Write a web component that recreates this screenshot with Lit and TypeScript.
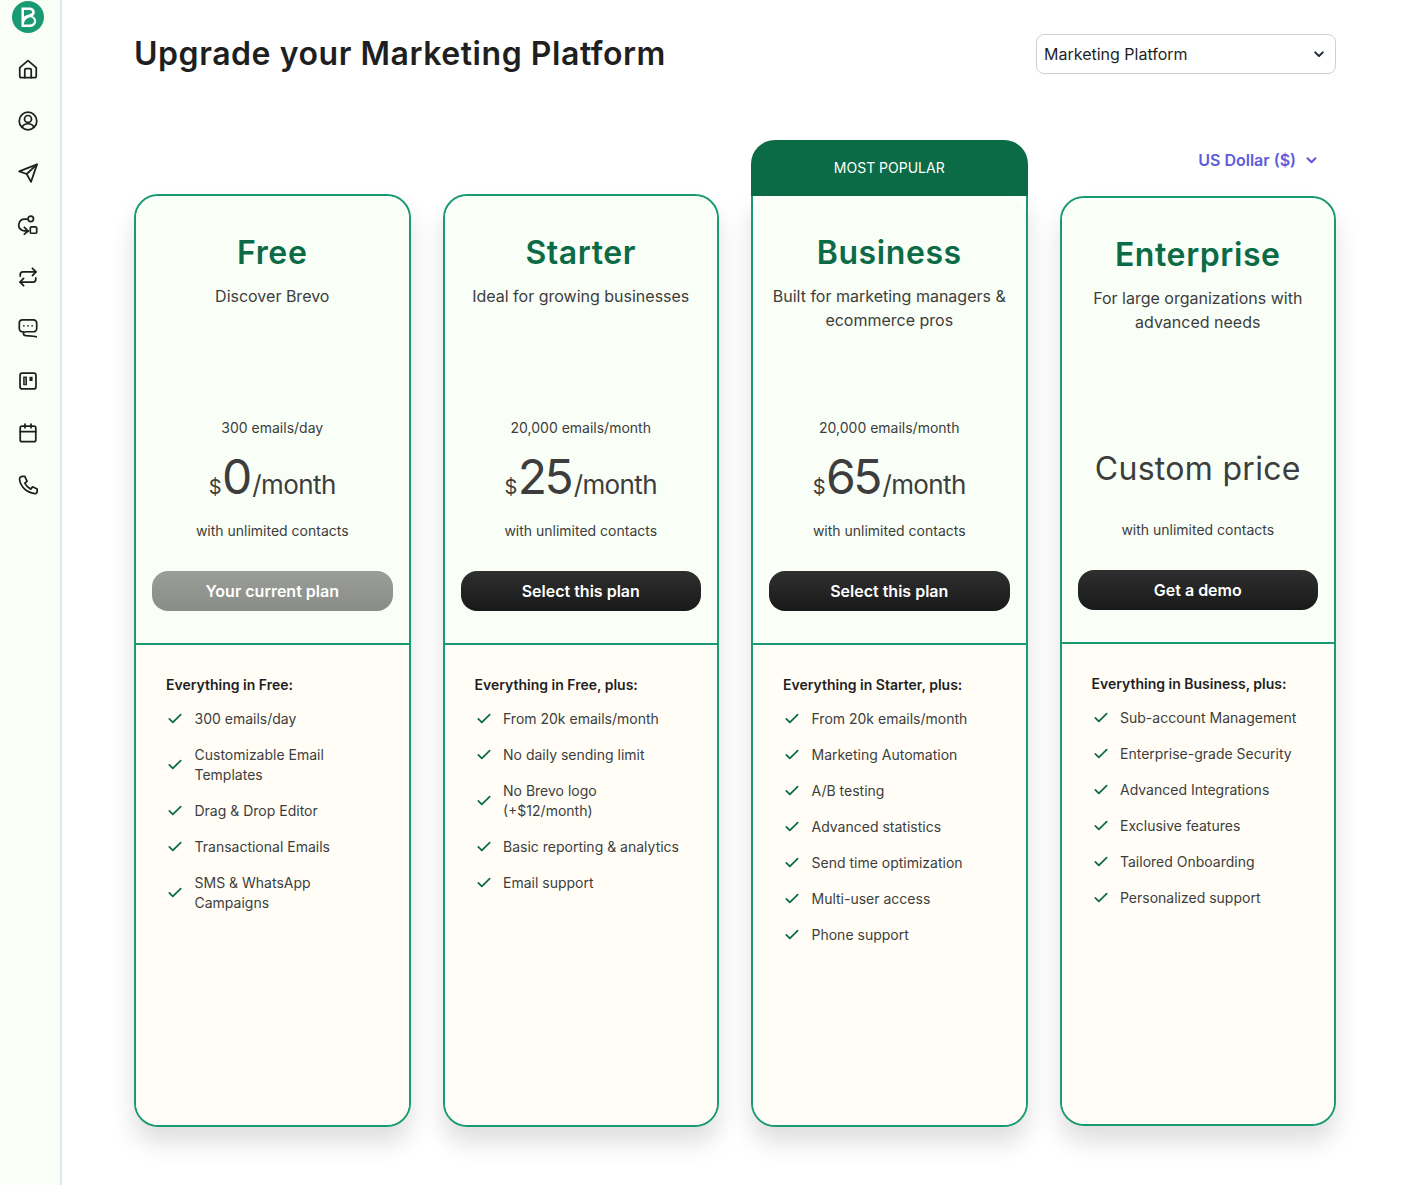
import { LitElement, css, html, nothing, svg } from 'lit';
import { customElement } from 'lit/decorators.js';

interface Plan {
  name: string;
  desc: string;
  allowance?: string;
  price?: string;
  cta: string;
  current?: boolean;
  popular?: boolean;
  custom?: boolean;
  heading: string;
  features: string[];
}

const plans: Plan[] = [
  {
    name: 'Free',
    desc: 'Discover Brevo',
    allowance: '300 emails/day',
    price: '0',
    cta: 'Your current plan',
    current: true,
    heading: 'Everything in Free:',
    features: ['300 emails/day', 'Customizable Email Templates', 'Drag & Drop Editor', 'Transactional Emails', 'SMS & WhatsApp Campaigns'],
  },
  {
    name: 'Starter',
    desc: 'Ideal for growing businesses',
    allowance: '20,000 emails/month',
    price: '25',
    cta: 'Select this plan',
    heading: 'Everything in Free, plus:',
    features: ['From 20k emails/month', 'No daily sending limit', 'No Brevo logo (+$12/month)', 'Basic reporting & analytics', 'Email support'],
  },
  {
    name: 'Business',
    desc: 'Built for marketing managers & ecommerce pros',
    allowance: '20,000 emails/month',
    price: '65',
    cta: 'Select this plan',
    popular: true,
    heading: 'Everything in Starter, plus:',
    features: ['From 20k emails/month', 'Marketing Automation', 'A/B testing', 'Advanced statistics', 'Send time optimization', 'Multi-user access', 'Phone support'],
  },
  {
    name: 'Enterprise',
    desc: 'For large organizations with advanced needs',
    custom: true,
    cta: 'Get a demo',
    heading: 'Everything in Business, plus:',
    features: ['Sub-account Management', 'Enterprise-grade Security', 'Advanced Integrations', 'Exclusive features', 'Tailored Onboarding', 'Personalized support'],
  },
];

const navIcons = [
  svg`<path d="M3 10.500 12 2.800l9 7.700v9a2 2 0 0 1-2 2H5a2 2 0 0 1-2-2z"/><path d="M8.500 21.500V13a1.500 1.500 0 0 1 1.500-1.500h4a1.500 1.500 0 0 1 1.500 1.500v8.500"/>`,
  svg`<circle cx="12" cy="12" r="9.600"/><circle cx="12" cy="9.800" r="3.800"/><path d="M5.500 19c1.200-2.800 3.600-4 6.500-4s5.300 1.200 6.500 4"/>`,
  svg`<path d="M21.800 2.600 2.400 10.200l8.200 2.900 4.700 8.600z"/><path d="M21.800 2.600 10.600 13.100"/>`,
  svg`<circle cx="15" cy="5.300" r="3"/><rect x="14.500" y="14" width="7" height="7" rx="1.500"/><path d="M11 5.500H8.500a6.500 6.500 0 0 0-2.500 12.500c1.500.6 3.200.6 6 .6"/><path d="m8 14.500 4.200 4.100L8 22"/>`,
  svg`<path d="M3.500 11V9.500a3 3 0 0 1 3-3h14"/><path d="m16.800 2.500 3.900 4-3.900 4"/><path d="M20.500 13v1.500a3 3 0 0 1-3 3h-14"/><path d="m7.200 13.500-3.900 4 3.900 4"/>`,
  svg`<path d="M7 15H6a3.500 3.500 0 0 1-3.500-3.500V5.500A3.500 3.500 0 0 1 6 2h12a3.500 3.500 0 0 1 3.500 3.500v6A3.500 3.500 0 0 1 18 15h-8c-2 0-3 .6-3 1.800s1.200 2.300 3 2.500c3.500.2 8.500 0 11 1.200"/><path d="M7.500 8.500h.01M12 8.500h.01M16.500 8.500h.01"/>`,
  svg`<rect x="3.300" y="3.300" width="17.400" height="17.400" rx="2.500"/><rect x="7.400" y="7.700" width="2.800" height="8.400" fill="#8a8a8a" stroke-width="1.300"/><rect x="13.600" y="7.400" width="3.400" height="4.600" fill="currentColor" stroke="none"/>`,
  svg`<rect x="3.500" y="4.500" width="17" height="17" rx="2"/><path d="M3.500 10.500h17M8.700 2.300v4M15.300 2.300v4"/>`,
  svg`<path d="M6 2.500h2.500L11 8 8.500 10c1.500 3 3.500 5 6.500 6.500l2-2.500 5 2.300v2.700c0 1.500-1.200 2.500-2.700 2.300C10 20 3.500 13.500 2.800 5.500 2.700 3.800 4 2.500 6 2.500z"/>`,
];

const chevron = html`<svg class="chevron" viewBox="0 0 12 8" aria-hidden="true"><path d="M1.500 1.500 6 6l4.500-4.500"/></svg>`;
const check = html`<svg class="check" viewBox="0 0 16 12" aria-hidden="true"><path d="M1.500 6.500 5.500 10.300 14.500 1.500"/></svg>`;

@customElement('app-root')
export class AppRoot extends LitElement {
  static override styles = css`
    :host {
      display: flex;
      min-height: 1185px;
      background: #fff;
      color: #1f1f1f;
      font-family: Inter, 'Liberation Sans', sans-serif;
    }

    .sidebar {
      flex: none;
      box-sizing: border-box;
      width: 62px;
      padding: 1px 4px 0 0;
      display: flex;
      flex-direction: column;
      align-items: center;
      gap: 30px;
      background: #f9fff6;
      border-right: 2px solid #d6ece4;
    }

    .logo {
      width: 32px;
      height: 32px;
      margin-bottom: -5px;
    }

    .nav-icon {
      width: 22px;
      height: 22px;
      fill: none;
      stroke: #1f1f1f;
      color: #1f1f1f;
      stroke-width: 1.9;
      stroke-linecap: round;
      stroke-linejoin: round;
    }

    main {
      flex: 1;
      min-width: 0;
      padding: 34px 65px 0 72px;
    }

    header {
      display: flex;
      justify-content: space-between;
      align-items: center;
      height: 40px;
      margin-bottom: 66px;
    }

    h1 {
      margin: 0;
      font-size: 32px;
      line-height: 40px;
      font-weight: 600;
      letter-spacing: 0.55px;
      color: #1f1f1f;
    }

    .select {
      box-sizing: border-box;
      width: 300px;
      height: 40px;
      padding: 0 11px 0 7px;
      display: flex;
      align-items: center;
      justify-content: space-between;
      font-size: 16px;
      border: 1px solid #cfcfcf;
      border-radius: 8px;
      background: #fff;
    }

    .chevron {
      width: 10px;
      height: 7px;
      fill: none;
      stroke: #1f2937;
      stroke-width: 2.4;
      stroke-linecap: round;
      stroke-linejoin: round;
    }

    .plans {
      display: grid;
      grid-template-columns: repeat(4, 1fr);
      column-gap: 32px;
      height: 987px;
    }

    .column {
      display: flex;
      flex-direction: column;
      min-width: 0;
    }

    .slot {
      flex: none;
      height: 54px;
    }

    .tag {
      position: relative;
      z-index: 1;
      box-sizing: border-box;
      height: 56px;
      padding-bottom: 2px;
      display: flex;
      align-items: center;
      justify-content: center;
      background: #0b6b46;
      color: #fff;
      font-size: 14px;
      font-weight: 400;
      border-radius: 24px 24px 0 0;
    }

    .currency {
      height: 40px;
      padding-right: 19px;
      display: flex;
      align-items: center;
      justify-content: flex-end;
      gap: 10px;
      color: #5c5cdd;
      font-size: 16px;
      font-weight: 600;
    }

    .currency .chevron {
      width: 11px;
      height: 7px;
      stroke: #5c5cdd;
    }

    .card {
      flex: 1;
      min-height: 0;
      display: flex;
      flex-direction: column;
      background: #fff;
      border: 2px solid #1a9a72;
      border-radius: 24px;
      box-shadow: 0 16px 24px rgba(0, 0, 0, 0.13);
      overflow: hidden;
    }

    .column.popular .card {
      border-radius: 0 0 24px 24px;
    }

    .column.enterprise .slot {
      height: 56px;
    }

    .column.enterprise {
      margin-bottom: 1px;
    }

    .pane {
      flex: none;
      box-sizing: border-box;
      padding: 36px 16px 32px;
      text-align: center;
      background: #f9fff6;
      border-radius: 22px 22px 0 0;
      border-bottom: 2px solid #1a9a72;
      color: #3d3d3d;
    }

    h2 {
      margin: 1px 0 11px;
      font-size: 32px;
      line-height: 40px;
      font-weight: 600;
      letter-spacing: 0.6px;
      color: #0b6b46;
    }

    .desc {
      height: 134px;
      font-size: 16px;
      line-height: 24px;
    }

    .allowance,
    .contacts {
      font-size: 14px;
      line-height: 20px;
    }

    .price {
      height: 60px;
      margin: 9px 0 14px;
      display: flex;
      align-items: baseline;
      justify-content: center;
      font-size: 26px;
      line-height: 60px;
      letter-spacing: -0.6px;
    }

    .price .currency-sign {
      font-size: 20px;
      margin-right: 1px;
    }

    .price .amount {
      font-size: 48px;
      letter-spacing: -2.5px;
      margin-right: 2.500px;
    }

    .custom-price {
      height: 96px;
      margin-bottom: 4px;
      font-size: 32px;
      line-height: 98px;
      letter-spacing: 0.3px;
    }

    .cta {
      height: 40px;
      margin-top: 30px;
      display: flex;
      align-items: center;
      justify-content: center;
      border-radius: 16px;
      background: linear-gradient(#2f2f2f, #191919);
      color: #fff;
      font-size: 16px;
      font-weight: 600;
    }

    .cta.current {
      background: linear-gradient(#9b9d99, #8a8c88);
    }

    .details {
      flex: 1;
      padding: 30px 34px 0 30px;
      background: #fffdf6;
    }

    h3 {
      margin: 0 0 14px;
      font-size: 14px;
      line-height: 20px;
      font-weight: 600;
      color: #1f1f1f;
    }

    ul {
      margin: 0;
      padding: 0;
      list-style: none;
      display: flex;
      flex-direction: column;
      gap: 16px;
    }

    li {
      display: flex;
      align-items: center;
      gap: 12.5px;
      padding-left: 2px;
      font-size: 14px;
      line-height: 20px;
      color: #3d3d3d;
    }

    .check {
      flex: none;
      width: 14px;
      height: 11px;
      margin-bottom: 2px;
      fill: none;
      stroke: #0b6b46;
      stroke-width: 2;
      stroke-linecap: round;
      stroke-linejoin: round;
    }
  `;

  private _renderPlan(plan: Plan) {
    return html`<div class="column ${plan.custom ? 'enterprise' : ''} ${plan.popular ? 'popular' : ''}">
      <div class="slot">
        ${plan.popular ? html`<div class="tag">MOST POPULAR</div>` : nothing}
        ${plan.custom ? html`<div class="currency">US Dollar ($) ${chevron}</div>` : nothing}
      </div>
      <article class="card">
        <div class="pane">
          <h2>${plan.name}</h2>
          <div class="desc">${plan.desc}</div>
          ${plan.custom
            ? html`<div class="custom-price">Custom price</div>`
            : html`<div class="allowance">${plan.allowance}</div>
                <div class="price">
                  <span class="currency-sign">$</span><span class="amount">${plan.price}</span><span>/month</span>
                </div>`}
          <div class="contacts">with unlimited contacts</div>
          <div class="cta ${plan.current ? 'current' : ''}">${plan.cta}</div>
        </div>
        <div class="details">
          <h3>${plan.heading}</h3>
          <ul>
            ${plan.features.map((feature) => html`<li>${check}<span>${feature}</span></li>`)}
          </ul>
        </div>
      </article>
    </div>`;
  }

  override render() {
    return html`<nav class="sidebar">
        <svg class="logo" viewBox="0 0 32 32" aria-label="Brevo">
          <circle cx="16" cy="16" r="16" fill="#1a9a72" />
          <path
            fill="#fff"
            fill-rule="evenodd"
            d="M9.500 6.500h7.500c3.500 0 5.800 2 5.800 4.800 0 1.700-.8 3-2.300 3.900 2.400.9 3.700 2.700 3.700 5 0 3.500-3 5.800-7 5.800H9.500zM12 9v6.500c2-1.300 4-1.800 5.500-2.300 1.700-.6 2.700-1 2.700-2.200 0-1.300-1.300-2-3.200-2zM12 23.500h5.500c2.700 0 4.500-1.300 4.500-3.500 0-1.900-1.400-3.300-3.300-3.700-3.800.7-6.700 2.800-6.700 7.200z"
          />
        </svg>
        ${navIcons.map((icon) => svg`<svg class="nav-icon" viewBox="0 0 24 24" aria-hidden="true">${icon}</svg>`)}
      </nav>
      <main>
        <header>
          <h1>Upgrade your Marketing Platform</h1>
          <div class="select">Marketing Platform ${chevron}</div>
        </header>
        <section class="plans">${plans.map((plan) => this._renderPlan(plan))}</section>
      </main>`;
  }
}

declare global {
  interface HTMLElementTagNameMap {
    'app-root': AppRoot;
  }
}
